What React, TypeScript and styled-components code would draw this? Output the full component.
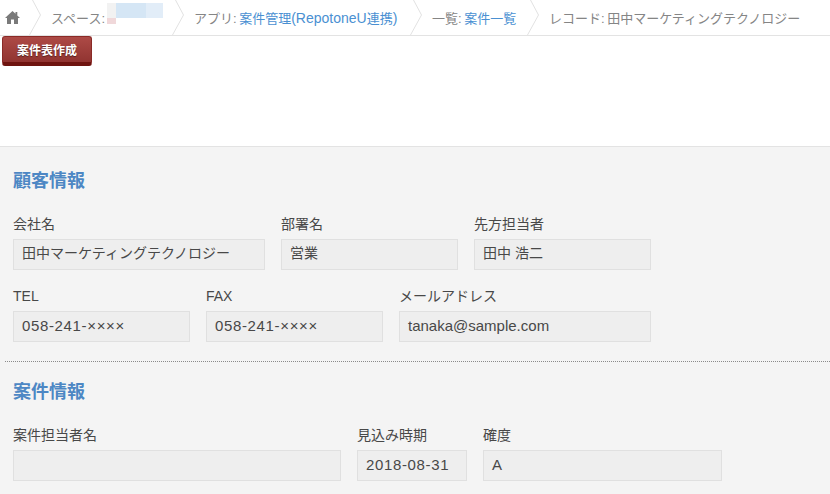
import React from "react";
import styled, { createGlobalStyle } from "styled-components";

const Global = createGlobalStyle`
  html, body { margin: 0; padding: 0; background: #fff; overflow: hidden; }
  body { font-family: "Liberation Sans", "Noto Sans CJK JP", sans-serif; }
`;

const Page = styled.div`
  width: 830px;
  height: 494px;
  overflow: hidden;
  display: flex;
  flex-direction: column;
`;

const Crumbs = styled.nav`
  height: 35px;
  flex: none;
  display: flex;
  align-items: center;
  border-bottom: 1px solid #e3e3e3;
  padding-left: 5px;
  font-size: 13px;
  color: #858585;
  white-space: nowrap;
`;

const HomeIcon = styled.svg`
  width: 15px;
  height: 15px;
  flex: none;
  margin-right: 9px;
`;

const Chevron = styled.svg`
  width: 12px;
  height: 35px;
  flex: none;
  margin-right: 10px;
`;

const Crumb = styled.span<{ $w: number }>`
  width: ${(p) => p.$w}px;
  flex: none;
  display: flex;
  align-items: center;
  height: 35px;
  position: relative;
`;

const CrumbLink = styled.span`
  color: #4a90d2;
  margin-left: 2.5px;
`;

const CrumbText = styled.span`
  margin-left: 2.5px;
`;

const CrumbLatin = styled.span`
  font-size: 14px;
`;

const Blur = styled.span<{ $x: number; $y: number; $w: number; $h: number; $c: string }>`
  position: absolute;
  left: ${(p) => p.$x}px;
  top: ${(p) => p.$y}px;
  width: ${(p) => p.$w}px;
  height: ${(p) => p.$h}px;
  background: ${(p) => p.$c};
`;

const Toolbar = styled.div`
  height: 110px;
  flex: none;
  padding-left: 2px;
  border-bottom: 1px solid #e3e3e3;
`;

const ActionButton = styled.button`
  display: block;
  width: 90px;
  height: 30px;
  margin: 0;
  padding: 0;
  border: 1px solid #8a2a27;
  border-bottom: 4px solid #6f1410;
  border-radius: 3px;
  background: linear-gradient(#ad4a46, #913431);
  color: #fff;
  font: bold 12px "Liberation Sans", "Noto Sans CJK JP", sans-serif;
  text-shadow: 0 1px 1px rgba(0, 0, 0, 0.45);
`;

const Panel = styled.main`
  flex: 1;
  background: #f4f4f4;
`;

const Section = styled.section<{ $divider?: boolean }>`
  margin-left: 5px;
  padding: ${(p) => (p.$divider ? "17px" : "21px")} 0 0 8px;
  border-top: ${(p) => (p.$divider ? "1px dotted #8a8a8a" : "none")};
  height: ${(p) => (p.$divider ? "auto" : "193px")};
`;

const Heading = styled.h2`
  margin: 0;
  font-size: 18px;
  line-height: 26px;
  font-weight: bold;
  color: #4d87c4;
`;

const Row = styled.div<{ $top: number }>`
  display: flex;
  gap: 16px;
  margin-top: ${(p) => p.$top}px;
`;

const Field = styled.div<{ $w: number }>`
  width: ${(p) => p.$w}px;
  flex: none;
`;

const Label = styled.div`
  font-size: 14px;
  line-height: 20px;
  height: 25px;
  color: #484848;
`;

const Value = styled.div<{ $latin?: boolean; $digits?: boolean }>`
  box-sizing: border-box;
  height: 31px;
  padding: 0 8px;
  background: #eeeeee;
  border: 1px solid #e0e0e0;
  font-size: ${(p) => (p.$latin || p.$digits ? "15px" : "14px")};
  line-height: 27px;
  color: #484848;
  white-space: nowrap;
  letter-spacing: ${(p) => (p.$digits ? "0.65px" : "0")};
`;

const Sep = () => (
  <Chevron viewBox="0 0 12 35">
    <path d="M3.5 0 L11.5 15 L0.5 35" fill="none" stroke="#e2e2e2" strokeWidth="1" />
  </Chevron>
);

export default function App() {
  return (
    <Page>
      <Global />
      <Crumbs>
        <HomeIcon viewBox="0 0 15 15">
          <path d="M7.5 1 L10.5 3.8 V2 H12.3 V5.5 L15 8 H13 V14 H9 V9.5 H6 V14 H2 V8 H0 Z" fill="#7a7a7a" />
        </HomeIcon>
        <Sep />
        <Crumb $w={121}>
          スペース:
          <Blur $x={56} $y={3} $w={9} $h={15} $c="#f2f2f2" />
          <Blur $x={56} $y={18} $w={9} $h={6} $c="#f0d8da" />
          <Blur $x={65} $y={3} $w={30} $h={15} $c="#d5e6f5" />
          <Blur $x={95} $y={3} $w={17} $h={15} $c="#e2edf8" />
        </Crumb>
        <Sep />
        <Crumb $w={216}>
          アプリ:
          <CrumbLink>
            案件管理<CrumbLatin>(RepotoneU</CrumbLatin>連携<CrumbLatin>)</CrumbLatin>
          </CrumbLink>
        </Crumb>
        <Sep />
        <Crumb $w={95}>
          一覧:<CrumbLink>案件一覧</CrumbLink>
        </Crumb>
        <Sep />
        <Crumb $w={270}>
          レコード:<CrumbText>田中マーケティングテクノロジー</CrumbText>
        </Crumb>
      </Crumbs>
      <Toolbar>
        <ActionButton>案件表作成</ActionButton>
      </Toolbar>
      <Panel>
        <Section>
          <Heading>顧客情報</Heading>
          <Row $top={20}>
            <Field $w={252}>
              <Label>会社名</Label>
              <Value>田中マーケティングテクノロジー</Value>
            </Field>
            <Field $w={177}>
              <Label>部署名</Label>
              <Value>営業</Value>
            </Field>
            <Field $w={177}>
              <Label>先方担当者</Label>
              <Value>田中 浩二</Value>
            </Field>
          </Row>
          <Row $top={16}>
            <Field $w={177}>
              <Label>TEL</Label>
              <Value $digits>058-241-××××</Value>
            </Field>
            <Field $w={177}>
              <Label>FAX</Label>
              <Value $digits>058-241-××××</Value>
            </Field>
            <Field $w={252}>
              <Label>メールアドレス</Label>
              <Value $latin>tanaka@sample.com</Value>
            </Field>
          </Row>
        </Section>
        <Section $divider>
          <Heading>案件情報</Heading>
          <Row $top={20}>
            <Field $w={328}>
              <Label>案件担当者名</Label>
              <Value />
            </Field>
            <Field $w={110}>
              <Label>見込み時期</Label>
              <Value $digits>2018-08-31</Value>
            </Field>
            <Field $w={239}>
              <Label>確度</Label>
              <Value $latin>A</Value>
            </Field>
          </Row>
        </Section>
      </Panel>
    </Page>
  );
}
